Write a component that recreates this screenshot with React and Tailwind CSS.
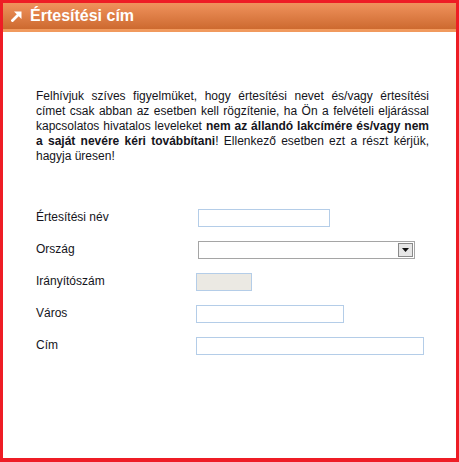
import React from "react";

const fields = [
  { label: "Értesítési név", kind: "text", width: "w-[132px]", shift: "ml-[2px]" },
  { label: "Ország", kind: "select" },
  { label: "Irányítószám", kind: "disabled", width: "w-[56px]" },
  { label: "Város", kind: "text", width: "w-[148px]" },
  { label: "Cím", kind: "text", width: "w-[228px]" },
];

const ArrowIcon = () => (
  <svg width="11" height="11" viewBox="0 0 11 11" className="shrink-0">
    <path d="M1.5 9.5 L8 3" stroke="#fff" strokeWidth="2.8" strokeLinecap="square" />
    <path d="M3 0.5 H10.5 V8 Z" fill="#fff" />
  </svg>
);

const CountrySelect = () => (
  <div className="ml-[2px] flex h-[18px] w-[217px] items-stretch border border-[#a5a5a5] bg-white p-px">
    <div className="flex-1" />
    <div className="flex w-[15px] items-center justify-center border border-[#8a8a8a] bg-[#e6e6e6]">
      <svg width="7" height="4" viewBox="0 0 7 4">
        <path d="M0 0 H7 L3.5 4 Z" fill="#111" />
      </svg>
    </div>
  </div>
);

export default function App() {
  return (
    <div className="flex h-[462px] w-[459px] flex-col border-t-[3px] border-r-[3px] border-b-[4px] border-l-[3px] border-[#ee1c25] bg-white font-['Liberation_Sans',Arial,sans-serif] text-[12px] text-[#141420]">
      {/* header */}
      <div className="flex h-[26px] items-center gap-[8px] bg-gradient-to-b from-[#f0925c] to-[#cd6a2f] pl-[8px]">
        <ArrowIcon />
        <span className="text-[16px] font-bold text-white">Értesítési cím</span>
      </div>
      <div className="h-[3px] bg-[#f19a5e]" />

      <div className="pr-[27px] pl-[33px]">
        <p className="mt-[57px] text-justify leading-[15px]">
          Felhívjuk szíves figyelmüket, hogy értesítési nevet és/vagy értesítési
          címet csak abban az esetben kell rögzítenie, ha Ön a felvételi eljárással
          kapcsolatos hivatalos leveleket{" "}
          <b>nem az állandó lakcímére és/vagy nem a saját nevére kéri továbbítani</b>
          ! Ellenkező esetben ezt a részt kérjük, hagyja üresen!
        </p>

        <div className="mt-[44px] flex flex-col gap-[13px]">
          {fields.map((f) => (
            <div key={f.label} className="flex items-start">
              <label className="w-[160px] shrink-0 pt-[2px] leading-[14px]">{f.label}</label>
              <div className="pt-[1px]">
                {f.kind === "select" ? (
                  <CountrySelect />
                ) : (
                  <input
                    type="text"
                    disabled={f.kind === "disabled"}
                    className={`block h-[18px] border border-[#b4cde8] px-1 text-[12px] outline-none ${f.width} ${f.shift || ""} ${
                      f.kind === "disabled" ? "bg-[#ebe9e3]" : "bg-white"
                    }`}
                  />
                )}
              </div>
            </div>
          ))}
        </div>
      </div>
    </div>
  );
}
